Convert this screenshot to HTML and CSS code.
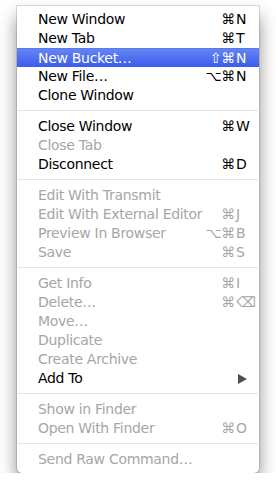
FILE: index.html
```html
<!DOCTYPE html>
<html lang="en">

<head>
    <meta charset="UTF-8">
    <meta name="viewport" content="width=device-width, initial-scale=1.0">
    <title>File Menu</title>
    <link rel="stylesheet" href="styles.css">
</head>

<body>
    <div class="menu">
        <div class="item"><span class="label">New Window</span><span class="mods">⌘</span><span class="key">N</span></div>
        <div class="item"><span class="label">New Tab</span><span class="mods">⌘</span><span class="key">T</span></div>
        <div class="item selected"><span class="label">New Bucket…</span><span class="mods">⇧⌘</span><span class="key">N</span></div>
        <div class="item"><span class="label">New File…</span><span class="mods">⌥⌘</span><span class="key">N</span></div>
        <div class="item"><span class="label">Clone Window</span></div>

        <div class="separator"></div>

        <div class="item"><span class="label">Close Window</span><span class="mods">⌘</span><span class="key">W</span></div>
        <div class="item disabled"><span class="label">Close Tab</span></div>
        <div class="item"><span class="label">Disconnect</span><span class="mods">⌘</span><span class="key">D</span></div>

        <div class="separator"></div>

        <div class="item disabled"><span class="label">Edit With Transmit</span></div>
        <div class="item disabled"><span class="label">Edit With External Editor</span><span class="mods">⌘</span><span class="key">J</span></div>
        <div class="item disabled"><span class="label">Preview In Browser</span><span class="mods">⌥⌘</span><span class="key">B</span></div>
        <div class="item disabled"><span class="label">Save</span><span class="mods">⌘</span><span class="key">S</span></div>

        <div class="separator"></div>

        <div class="item disabled"><span class="label">Get Info</span><span class="mods">⌘</span><span class="key">I</span></div>
        <div class="item disabled"><span class="label">Delete…</span><span class="mods">⌘</span><span class="key">⌫</span></div>
        <div class="item disabled"><span class="label">Move…</span></div>
        <div class="item disabled"><span class="label">Duplicate</span></div>
        <div class="item disabled"><span class="label">Create Archive</span></div>
        <div class="item"><span class="label">Add To</span>
            <span class="key arrow"><svg width="9" height="10" viewBox="0 0 9 10"><path d="M0 0 L9 5 L0 10 Z" fill="#4f4f4f"/></svg></span>
        </div>

        <div class="separator"></div>

        <div class="item disabled"><span class="label">Show in Finder</span></div>
        <div class="item disabled"><span class="label">Open With Finder</span><span class="mods">⌘</span><span class="key">O</span></div>

        <div class="separator"></div>

        <div class="item disabled"><span class="label">Send Raw Command…</span></div>
    </div>
</body>

</html>
```

FILE: styles.css
```css
body {
    margin: 0;
    padding: 6px 0 0 17px;
    background-color: #fff;
    font-family: 'DejaVu Sans', 'Liberation Sans', sans-serif;
    font-size: 14px;
    letter-spacing: -0.3px;
    color: #000;
}

.menu {
    width: 242px;
    padding: 4px 0;
    background-color: #fff;
    border-radius: 0 0 5px 5px;
    box-shadow: 0 0 0 1px rgba(0, 0, 0, 0.12), 0 10px 18px rgba(0, 0, 0, 0.45);
}

.item {
    display: flex;
    align-items: center;
    height: 19px;
    line-height: 19px;
    padding: 0 7px 0 21px;
    white-space: nowrap;
}

.item .label {
    flex: 1;
}

.item .mods {
    text-align: right;
}

.item .key {
    width: 16px;
    padding-left: 1px;
}

.item .arrow {
    display: flex;
    align-items: center;
    padding-left: 3px;
    width: 14px;
}

.item.disabled {
    color: #a6a6a6;
}

.item.selected {
    color: #fff;
    background: linear-gradient(#6584f2, #3a5ced);
    border-top: 1px solid #5a79ee;
    height: 18px;
}

.separator {
    height: 1px;
    margin: 5px 1px 6px;
    background-color: #e3e3e3;
}
```
